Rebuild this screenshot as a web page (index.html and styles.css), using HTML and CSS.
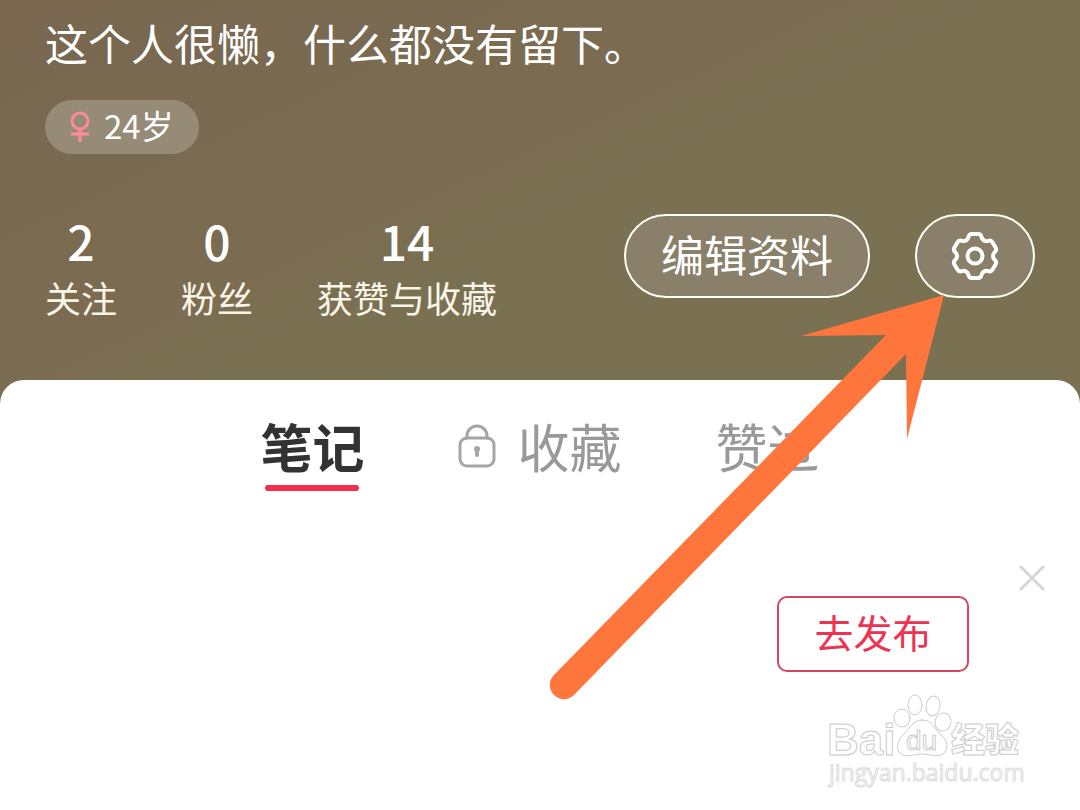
FILE: index.html
```
<!DOCTYPE html>
<html lang="zh-CN">
<head>
    <meta charset="UTF-8">
    <meta name="viewport" content="width=device-width, initial-scale=1.0">
    <title>个人主页</title>
    <link rel="stylesheet" href="styles.css">
</head>
<body>
    <header class="profile">
        <p class="bio">这个人很懒，什么都没有留下。</p>
        <div class="badge">
            <svg class="female" viewBox="0 0 20 32" aria-hidden="true">
                <circle cx="10" cy="10" r="8"/>
                <path d="M10 18v13M1 23h18"/>
            </svg>
            <span class="age">24岁</span>
        </div>
        <div class="profile-row">
            <ul class="stats">
                <li><span class="count">2</span><span class="name">关注</span></li>
                <li><span class="count">0</span><span class="name">粉丝</span></li>
                <li><span class="count">14</span><span class="name">获赞与收藏</span></li>
            </ul>
            <div class="actions">
                <button type="button" class="pill edit">编辑资料</button>
                <button type="button" class="pill settings" aria-label="设置">
                    <svg class="gear" viewBox="-25 -25 50 50" aria-hidden="true">
                        <defs>
                            <path id="tooth" d="M-9 -15.6Q-7 -16.7 -6.5 -19Q-6 -22 -3 -22H3Q6 -22 6.5 -19Q7 -16.7 9 -15.6"/>
                        </defs>
                        <use href="#tooth"/>
                        <use href="#tooth" transform="rotate(60)"/>
                        <use href="#tooth" transform="rotate(120)"/>
                        <use href="#tooth" transform="rotate(180)"/>
                        <use href="#tooth" transform="rotate(240)"/>
                        <use href="#tooth" transform="rotate(300)"/>
                        <circle r="7.5"/>
                    </svg>
                </button>
                <!-- 指向设置按钮的箭头 -->
                <svg class="arrow" viewBox="540 290 410 415" aria-hidden="true">
                    <path d="M554 675L886 335L801 336L944 295L907 439L906 354L574 695A14 14 0 0 1 554 675Z"/>
                </svg>
            </div>
        </div>
    </header>

    <main class="sheet">
        <nav class="tabs">
            <a href="#notes" class="tab active">笔记</a>
            <a href="#collect" class="tab">
                <svg class="lock" viewBox="0 0 38 44" aria-hidden="true">
                    <path d="M9 14V12a10 10 0 0 1 20 0v2"/>
                    <rect x="2" y="14" width="34" height="28" rx="7"/>
                    <path d="M19 25v6" class="hole"/>
                    <circle cx="19" cy="25" r="3" class="dot"/>
                </svg>
                收藏
            </a>
            <a href="#liked" class="tab">赞过</a>
        </nav>
        <section class="prompt">
            <button type="button" class="publish">去发布</button>
            <button type="button" class="close" aria-label="关闭">
                <svg viewBox="0 0 26 26" aria-hidden="true"><path d="M2 2l22 22M24 2L2 24"/></svg>
            </button>
        </section>
    </main>

    <!-- 水印 -->
    <svg class="watermark" viewBox="820 690 210 100" role="img" aria-label="Baidu 经验">
        <text x="827" y="755" class="mark-bai">Bai</text>
        <ellipse cx="902" cy="718" rx="8" ry="9"/>
        <ellipse cx="915" cy="705" rx="7" ry="10"/>
        <ellipse cx="933" cy="706" rx="7" ry="10" transform="rotate(10 933 706)"/>
        <ellipse cx="943" cy="722" rx="8" ry="9" transform="rotate(15 943 722)"/>
        <path d="M922 720C932 720 934 728 940 734C948 740 949 749 943 754C937 758 930 754 922 754C914 754 908 758 901 754C895 749 897 740 904 734C910 728 913 720 922 720Z"/>
        <text x="906" y="750" class="mark-du">du</text>
        <text x="951" y="752" class="mark-cn">经验</text>
        <text x="829" y="781" class="mark-url">jingyan.baidu.com</text>
    </svg>
</body>
</html>
```
FILE: styles.css
```
* {
    box-sizing: border-box;
}

body {
    margin: 0;
    min-height: 100vh;
    display: flex;
    flex-direction: column;
    position: relative;
    background: #fff;
    font-family: "Noto Sans CJK SC", "Noto Sans", sans-serif;
}

button {
    font-family: inherit;
    padding: 0;
    background: none;
    border: none;
    cursor: pointer;
}

svg {
    display: block;
    fill: none;
    stroke-linecap: round;
    stroke-linejoin: round;
}

/* 个人资料 */
.profile {
    padding: 12px 45px 76px;
    color: #fff;
    background: linear-gradient(155deg, #796750 0%, #7b6c51 40%, #797152 58%, #7a7052 100%);
}

.bio {
    margin: 0 0 28px;
    font-size: 43px;
    line-height: 60px;
}

.badge {
    display: inline-flex;
    align-items: center;
    gap: 14px;
    height: 54px;
    padding: 0 25px;
    border-radius: 27px;
    background: #968b76;
    vertical-align: top;
}

.age {
    padding-bottom: 4px;
    font-size: 33px;
    line-height: 50px;
}

.female {
    width: 20px;
    height: 32px;
    stroke: #fd8b98;
    stroke-width: 3;
    stroke-linecap: butt;
}

.profile-row {
    display: flex;
    justify-content: space-between;
    align-items: flex-start;
    margin-top: 60px;
}

.stats {
    display: flex;
    gap: 64px;
    margin: 0;
    padding: 0;
    list-style: none;
    text-align: center;
}

.count,
.name {
    display: block;
}

.count {
    font-size: 48px;
    font-weight: 500;
    line-height: 52px;
}

.name {
    color: #fbf5e8;
    font-size: 36px;
    line-height: 62px;
}

.actions {
    display: flex;
    gap: 45px;
    position: relative;
}

.pill {
    height: 84px;
    border: 2px solid #fffdf5;
    border-radius: 42px;
    background: #8a8069;
    color: #fff;
}

.edit {
    padding: 0 35px 6px;
    font-size: 43px;
    line-height: 74px;
}

.settings {
    display: flex;
    align-items: center;
    justify-content: center;
    width: 120px;
}

.gear {
    width: 50px;
    height: 50px;
    stroke: #fff;
    stroke-width: 4;
}

.arrow {
    position: absolute;
    top: 76px;
    right: 85px;
    z-index: 2;
    width: 410px;
    height: 415px;
    fill: #ff763d;
    pointer-events: none;
}

/* 白色内容区 */
.sheet {
    flex: 1;
    margin-top: -24px;
    border-radius: 24px 24px 0 0;
    background: #fff;
}

.tabs {
    display: flex;
    justify-content: center;
    gap: 94px;
    padding-top: 29px;
}

.tab {
    display: flex;
    align-items: center;
    gap: 21px;
    position: relative;
    padding-bottom: 8px;
    color: #999;
    font-size: 52px;
    line-height: 74px;
    text-decoration: none;
}

.active {
    color: #333;
    font-weight: bold;
}

.active::after {
    content: "";
    position: absolute;
    right: 5px;
    bottom: 0;
    left: 5px;
    height: 6px;
    border-radius: 3px;
    background: #f22d4e;
}

.lock {
    width: 38px;
    height: 44px;
    stroke: #a5a5a5;
    stroke-width: 3;
}

.lock .hole {
    stroke-width: 4;
}

.lock .dot {
    fill: #a5a5a5;
    stroke: none;
}

.prompt {
    display: flex;
    justify-content: flex-end;
    align-items: flex-start;
    gap: 50px;
    padding: 74px 35px 0;
}

.publish {
    width: 192px;
    height: 76px;
    margin-top: 31px;
    padding-bottom: 6px;
    border: 2px solid #d6455f;
    border-radius: 10px;
    color: #ec3452;
    font-size: 39px;
    line-height: 66px;
}

.close svg {
    width: 26px;
    height: 26px;
    stroke: #d6d6d6;
    stroke-width: 3;
}

/* 水印 */
.watermark {
    position: absolute;
    right: 50px;
    bottom: 20px;
    width: 210px;
    height: 100px;
    fill: #fff;
    stroke: #ccc;
    stroke-width: 1;
    pointer-events: none;
}

.mark-bai {
    font: bold 44px "Liberation Sans", sans-serif;
}

.mark-du {
    font: 28px "Liberation Sans", sans-serif;
}

.mark-cn {
    font: 900 34px "Noto Sans CJK SC", sans-serif;
}

.mark-url {
    font: 23px "Open Sans", sans-serif;
    fill: #f8f8f8;
    stroke: #ddd;
}
```
